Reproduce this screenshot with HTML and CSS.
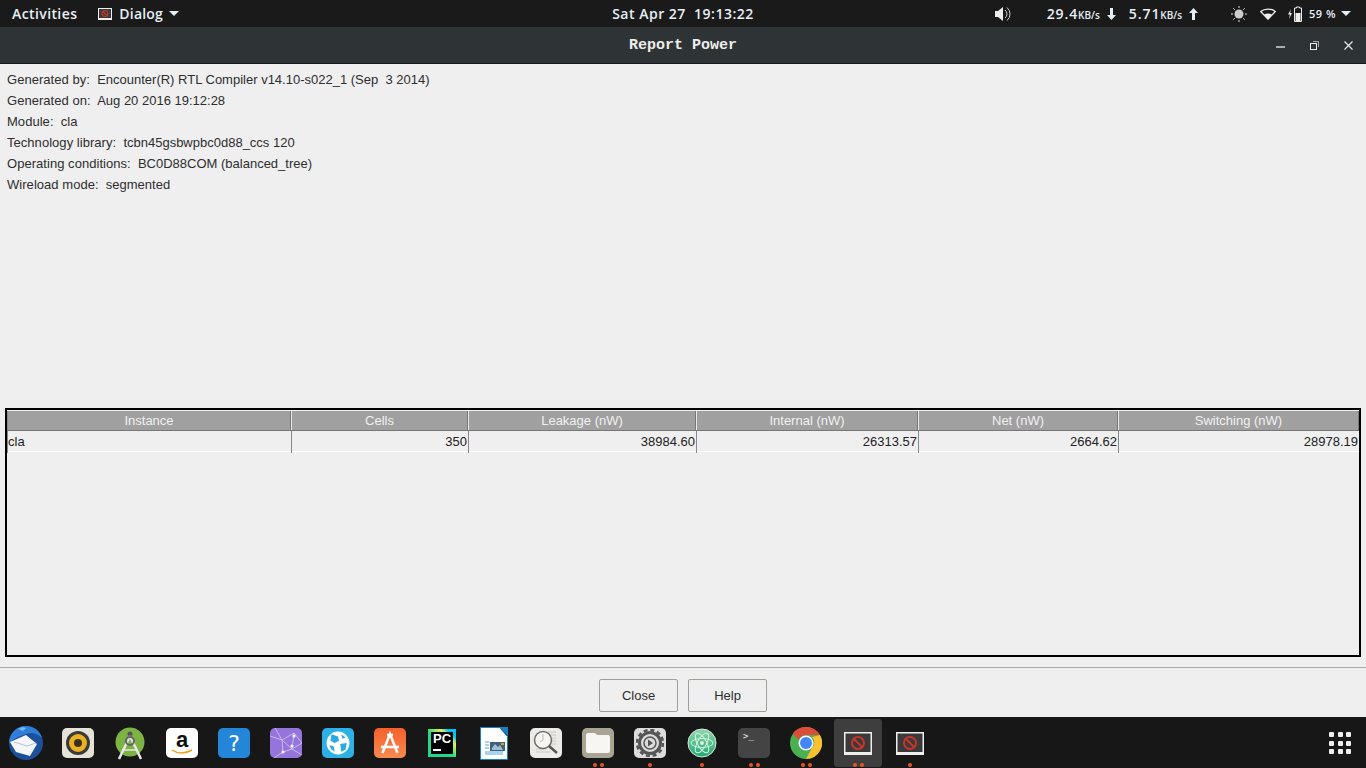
FILE: index.html
```html
<!DOCTYPE html>
<html lang="en">
<head>
    <meta charset="UTF-8">
    <title>Report Power</title>
    <link rel="stylesheet" href="styles.css">
</head>
<body>
    <div class="topbar">
        <div class="top-left">
            <span class="activities">Activities</span>
            <span class="app-menu">
                <svg class="app-icon" width="14" height="12" viewBox="0 0 14 12"><rect width="14" height="12" fill="#eee"/><rect x="1" y="1" width="12" height="9" fill="#3a3a3a"/><circle cx="7" cy="5.500" r="3" fill="none" stroke="#c0392b" stroke-width="1.200"/><path d="M5 3.500l4 4" stroke="#c0392b" stroke-width="1.200"/></svg>
                <span class="app-name">Dialog</span>
                <span class="caret"></span>
            </span>
        </div>
        <div class="clock">Sat Apr 27&nbsp;&nbsp;19:13:22</div>
        <div class="top-right">
            <svg class="volume" width="16" height="16" viewBox="0 0 16 16"><path d="M0 5h3l5-4v14l-5-4H0z" fill="#eee"/><path d="M10 4a5 5 0 0 1 0 8M12 1.500a8.500 8.500 0 0 1 0 13" fill="none" stroke="#ccc"/></svg>
            <span class="speed"><b>29.4</b><small>KB/s</small></span>
            <svg class="arrow" width="9" height="12" viewBox="0 0 9 12"><path d="M3 0h3v7h3l-4.500 5L0 7h3z" fill="#e8eef5"/></svg>
            <span class="speed"><b>5.71</b><small>KB/s</small></span>
            <svg class="arrow arrow-up" width="9" height="12" viewBox="0 0 9 12"><path d="M3 12h3V5h3L4.500 0 0 5h3z" fill="#e8eef5"/></svg>
            <svg class="brightness" width="16" height="16" viewBox="0 0 16 16"><circle cx="8" cy="8" r="4.500" fill="#ccc"/><path d="M8 0v2M8 14v2M0 8h2M14 8h2M2.300 2.300l1.500 1.500M12.200 12.200l1.500 1.500M2.300 13.700l1.500-1.500M12.200 3.800l1.500-1.500" stroke="#ddd" fill="none"/></svg>
            <svg class="wifi" width="16" height="12" viewBox="0 0 16 12"><path d="M.7 3.500C4.500.2 11.500.2 15.300 3.500L8 11.200z" fill="none" stroke="#eee" stroke-width="1.300"/><path d="M4 6.500c2.500-1.300 5.500-1.300 8 0L8 11z" fill="#eee"/></svg>
            <svg class="battery" width="15" height="16" viewBox="0 0 15 16"><path d="M3 3L0 8.500h2L1 13l3-6H2z" fill="#eee"/><path d="M8.500 1h3v1h2v13.500h-7V2h2z" fill="none" stroke="#eee"/><rect x="7.500" y="7" width="5" height="8" fill="#eee"/></svg>
            <span class="percent">59 %</span>
            <span class="caret"></span>
        </div>
    </div>

    <div class="titlebar">
        <span class="title">Report Power</span>
        <div class="window-buttons">
            <svg width="9" height="9" viewBox="0 0 9 9"><path d="M0 6h9" stroke="#eee" stroke-width="1.300"/></svg>
            <svg width="9" height="9" viewBox="0 0 9 9"><rect x=".5" y="2.500" width="6" height="6" fill="none" stroke="#eee"/><path d="M3 .5h5.500V6" fill="none" stroke="#aaa"/></svg>
            <svg width="9" height="9" viewBox="0 0 9 9"><path d="M.5.500l8 8M8.500.5l-8 8" stroke="#eee" stroke-width="1.100"/></svg>
        </div>
    </div>

    <div class="dialog">
        <div class="info">
            <p><span class="key">Generated by:</span>&nbsp; Encounter(R) RTL Compiler v14.10-s022_1 (Sep&nbsp; 3 2014)</p>
            <p><span class="key">Generated on:</span>&nbsp; Aug 20 2016 19:12:28</p>
            <p><span class="key">Module:</span>&nbsp; cla</p>
            <p><span class="key">Technology library:</span>&nbsp; tcbn45gsbwpbc0d88_ccs 120</p>
            <p><span class="key">Operating conditions:</span>&nbsp; BC0D88COM (balanced_tree)</p>
            <p><span class="key">Wireload mode:</span>&nbsp; segmented</p>
        </div>

        <div class="report">
            <div class="row head">
                <div>Instance</div>
                <div>Cells</div>
                <div>Leakage (nW)</div>
                <div>Internal (nW)</div>
                <div>Net (nW)</div>
                <div>Switching (nW)</div>
            </div>
            <div class="row data">
                <div>cla</div>
                <div>350</div>
                <div>38984.60</div>
                <div>26313.57</div>
                <div>2664.62</div>
                <div>28978.19</div>
            </div>
        </div>

        <div class="actions">
            <button type="button">Close</button>
            <button type="button">Help</button>
        </div>
    </div>

    <div class="dock">
        <div class="slot"><svg width="36" height="36" viewBox="0 0 36 36"><circle cx="18" cy="18" r="17" fill="#1c4f9c"/><path d="M1 18A17 17 0 0 1 18 1c8 0 14 5 16 12-5-5-11-6-16-4-7 2-12 5-17 9z" fill="#2f7fd8"/><path d="M10 4c3-2 6-2 8-1l-3 3z" fill="#7ab6ee"/><path d="M2 17l16-7 11 9-7 12-14-4z" fill="#f4f6fa"/><path d="M6 17l13 4 9-3" fill="none" stroke="#b8c4d8"/></svg></div>
        <div class="slot"><div class="tile tile-rhythm"><span class="speaker"></span></div></div>
        <div class="slot"><svg width="30" height="33" viewBox="0 0 30 33"><circle cx="15" cy="15" r="14.500" fill="#7cb342"/><circle cx="15" cy="7" r="2.500" fill="#555"/><path d="M15 9L4 32M15 9l11 23" stroke="#e8e8e8" stroke-width="2.500" fill="none"/><path d="M7 23h16" stroke="#e8e8e8" stroke-width="1.500"/><circle cx="15" cy="14" r="4" fill="none" stroke="#666" stroke-width="2"/></svg></div>
        <div class="slot"><div class="tile tile-amazon"><span class="amazon-a">a</span><svg width="22" height="6" viewBox="0 0 22 6"><path d="M1 1c6 4 13 4 20 0" fill="none" stroke="#f39c12" stroke-width="1.500"/></svg></div></div>
        <div class="slot"><div class="tile tile-help">?</div></div>
        <div class="slot"><div class="tile tile-mesh"><svg width="32" height="30" viewBox="0 0 32 30"><path d="M0 8l12 4 12-7 8 10-10 6-10-9M12 12L13 24l9-3M5 0l7 12M24 5l-2 16M13 24L4 30M22 21l10 6" fill="none" stroke="#d6c8f5" stroke-width=".8"/><circle cx="13" cy="24" r="1.500" fill="#fff"/><circle cx="22" cy="18" r="1.500" fill="#fff"/><circle cx="24" cy="8" r="1.500" fill="#fff"/></svg></div></div>
        <div class="slot"><div class="tile tile-globe"><svg width="24" height="24" viewBox="0 0 22 22"><circle cx="11" cy="11" r="10.500" fill="#fff"/><path d="M5 3l6 2 1 4-4 2-4-2zM13 12l6-1-1 6-4 2zM14 3l4 3-3 1zM3 13l4 1 1 5-3-2z" fill="#29abe2"/></svg></div></div>
        <div class="slot"><div class="tile tile-store"><svg width="24" height="24" viewBox="0 0 24 24"><path d="M4.500 22L12 3l7.500 19M3 16h18M9 4h6" stroke="#fff" stroke-width="2.500" fill="none"/></svg></div></div>
        <div class="slot"><div class="pycharm"><div class="pycharm-inner"><span>PC</span><i></i></div></div></div>
        <div class="slot"><svg width="28" height="33" viewBox="0 0 28 33"><path d="M.5.5h19l8 9v23H.5z" fill="#fff" stroke="#1b7fc4"/><path d="M19 0h9v9z" fill="#1b7fc4"/><rect x="10" y="15" width="15" height="9" fill="#41607a"/><path d="M12 21l3-4 3 3 2-2 3 5H12z" fill="#9ac0d8"/><path d="M21 16h3v2h-3z" fill="#e0a030"/><path d="M5 15h4M5 18h4M5 21h4M5 25h18M5 27h18" stroke="#58a6dc"/></svg></div>
        <div class="slot"><div class="tile tile-scan"><svg width="28" height="28" viewBox="0 0 28 28"><path d="M16 3h8M18 6h6M20 9h4M20 12h4M20 15h4M4 20h8M4 23h14" stroke="#c8c8c4"/><circle cx="11" cy="11" r="8.500" fill="#f5f5f2" stroke="#6e6e6a" stroke-width="1.500"/><path d="M11 5v6l-3 2" stroke="#bbb" fill="none"/><path d="M17 17l8 7" stroke="#555" stroke-width="2.500"/></svg></div></div>
        <div class="slot dots-2"><div class="tile tile-files"><svg width="24" height="20" viewBox="0 0 24 20"><path d="M0 2a2 2 0 0 1 2-2h7l2 2h11a2 2 0 0 1 2 2v14a2 2 0 0 1-2 2H2a2 2 0 0 1-2-2z" fill="#f7f6f3"/></svg></div></div>
        <div class="slot dots-1"><div class="tile tile-settings"><svg width="28" height="28" viewBox="0 0 28 28"><circle cx="14" cy="14" r="10.500" fill="none" stroke="#555" stroke-width="3"/><circle cx="14" cy="14" r="13" fill="none" stroke="#555" stroke-width="2.500" stroke-dasharray="4 2.800"/><circle cx="14" cy="14" r="6" fill="none" stroke="#555" stroke-width="1.500"/><path d="M12 10.500l5 3.500-5 3.500z" fill="#555"/></svg></div></div>
        <div class="slot dots-1"><svg width="30" height="30" viewBox="0 0 30 30"><defs><linearGradient id="atomFill" x1="0" y1="0" x2="0" y2="1"><stop offset="0" stop-color="#8fd6ac"/><stop offset="1" stop-color="#1fa870"/></linearGradient></defs><circle cx="15" cy="15" r="14" fill="url(#atomFill)" stroke="#d8e8dc"/><g fill="none" stroke="#d6f2e2"><ellipse cx="15" cy="15" rx="11" ry="4.500"/><ellipse cx="15" cy="15" rx="11" ry="4.500" transform="rotate(60 15 15)"/><ellipse cx="15" cy="15" rx="11" ry="4.500" transform="rotate(120 15 15)"/></g><circle cx="15" cy="15" r="2" fill="#d6f2e2"/></svg></div>
        <div class="slot dots-2"><div class="tile tile-term"><span>&gt;_</span></div></div>
        <div class="slot dots-2"><svg width="32" height="32" viewBox="0 0 32 32"><circle cx="16" cy="16" r="16" fill="#4caf50"/><path d="M16 0a16 16 0 0 1 13.900 8H16a8 8 0 0 0-7.500 5L2.800 6.500A16 16 0 0 1 16 0z" fill="#dd4b39"/><path d="M29.900 8A16 16 0 0 1 16 32l6.500-12A8 8 0 0 0 22 10z" fill="#fbc02d"/><circle cx="16" cy="16" r="7.500" fill="#fff"/><circle cx="16" cy="16" r="6" fill="#4285f4"/></svg></div>
        <div class="slot dots-2 active"><svg width="28" height="23" viewBox="0 0 28 23"><rect width="28" height="23" fill="#eee"/><rect x="1.500" y="1.500" width="25" height="18.500" fill="#3a3a3a"/><circle cx="14" cy="11" r="6" fill="none" stroke="#c8352b" stroke-width="2"/><path d="M10 7l8 8" stroke="#c8352b" stroke-width="2"/></svg></div>
        <div class="slot dots-1"><svg width="28" height="23" viewBox="0 0 28 23"><rect width="28" height="23" fill="#eee"/><rect x="1.500" y="1.500" width="25" height="18.500" fill="#3a3a3a"/><circle cx="14" cy="11" r="6" fill="none" stroke="#c8352b" stroke-width="2"/><path d="M10 7l8 8" stroke="#c8352b" stroke-width="2"/></svg></div>
        <div class="app-grid">
            <i></i><i></i><i></i><i></i><i></i><i></i><i></i><i></i><i></i>
        </div>
    </div>
</body>
</html>
```

FILE: styles.css
```css
html, body {
    margin: 0;
    padding: 0;
}
body {
    width: 1366px;
    height: 768px;
    overflow: hidden;
    display: flex;
    flex-direction: column;
    background-color: #efefef;
    font-family: "Liberation Sans", Arial, sans-serif;
}

/* top panel */
.topbar {
    height: 27px;
    flex: none;
    display: grid;
    grid-template-columns: 1fr auto 1fr;
    align-items: center;
    background-color: #1a1a1a;
    color: #e8eef5;
    font-family: "Open Sans", sans-serif;
    font-size: 14px;
    font-weight: 600;
}
.top-left {
    display: flex;
    align-items: center;
    padding-left: 12px;
}
.activities {
    margin-right: 21px;
    letter-spacing: .4px;
}
.app-menu {
    display: flex;
    align-items: center;
}
.app-icon {
    margin-right: 7px;
}
.app-name {
    letter-spacing: .2px;
}
.caret {
    display: inline-block;
    width: 0;
    height: 0;
    margin-left: 6px;
    border-left: 5px solid transparent;
    border-right: 5px solid transparent;
    border-top: 5px solid #e8eef5;
}
.clock {
    font-size: 14px;
    letter-spacing: .5px;
}
.top-right {
    display: flex;
    align-items: center;
    justify-content: flex-end;
    padding-right: 15px;
}
.top-right .caret {
    margin-left: 5px;
}
.volume {
    margin-right: 36px;
}
.speed b {
    font-weight: 600;
    letter-spacing: .9px;
}
.speed small {
    font-size: 10px;
}
.arrow {
    margin: 0 13px 0 7px;
}
.arrow-up {
    margin-right: 33px;
}
.brightness {
    margin-right: 13px;
}
.wifi {
    margin-right: 12px;
}
.battery {
    margin-right: 6px;
}
.percent {
    font-size: 11px;
    letter-spacing: .5px;
}

/* window title */
.titlebar {
    height: 36px;
    flex: none;
    position: relative;
    display: flex;
    align-items: center;
    justify-content: center;
    background-color: #2e3436;
    border-bottom: 1px solid #14181a;
    color: #eeeeec;
}
.title {
    font-family: "Liberation Mono", monospace;
    font-size: 15px;
    font-weight: bold;
}
.window-buttons {
    position: absolute;
    right: 13px;
    top: 14px;
    display: flex;
    gap: 25px;
}

/* dialog body */
.dialog {
    flex: 1;
    display: flex;
    flex-direction: column;
    color: #2e2e2e;
    font-size: 13px;
}
.info {
    height: 344px;
    flex: none;
    box-sizing: border-box;
    padding: 5px 7px 0;
}
.info p {
    margin: 0;
    height: 21px;
    line-height: 21px;
    white-space: pre;
}
.key {
    letter-spacing: .04px;
}
.report {
    height: 244px;
    flex: none;
    margin: 0 5px;
    padding-top: 1px;
    border: 2px solid #000;
}
.row {
    display: grid;
    grid-template-columns: 284px 177px 228px 222px 200px 241px;
}
.head {
    height: 19px;
    background-color: #a0a0a0;
    color: #f0f0f0;
    text-align: center;
    line-height: 19px;
    border-bottom: 1px solid #777;
}
.head div {
    border-right: 1px solid #777;
    border-left: 1px solid #e8e8e8;
    box-sizing: border-box;
}
.head div:first-child {
    border-left-color: #8a8a8a;
}
.data {
    height: 21px;
    line-height: 22px;
    color: #222;
    border-bottom: 1px solid #fff;
    box-sizing: border-box;
    text-align: right;
}
.data div {
    border-left: 1px solid #888;
    padding-right: 1px;
    box-sizing: border-box;
}
.data div:first-child {
    text-align: left;
}
.actions {
    flex: 1;
    margin-top: 10px;
    border-top: 1px solid #a8a8a4;
    display: flex;
    justify-content: center;
    gap: 10px;
    padding-top: 11px;
}
.actions button {
    width: 79px;
    height: 33px;
    background-color: #efefef;
    border: 1px solid #a39f98;
    border-radius: 2px;
    color: #2e2e2e;
    font-family: inherit;
    font-size: 13px;
    padding: 0;
}

/* dock */
.dock {
    height: 51px;
    flex: none;
    display: flex;
    align-items: flex-start;
    background-color: #171717;
    position: relative;
}
.slot {
    width: 48px;
    height: 48px;
    margin: 2px 2px 0;
    flex: none;
    display: flex;
    align-items: center;
    justify-content: center;
    position: relative;
    border-radius: 3px;
}
.slot.active {
    background-color: #3e3e3e;
}
.dots-1::after,
.dots-2::after {
    content: "";
    position: absolute;
    bottom: 0;
    left: 50%;
    width: 4px;
    height: 4px;
    border-radius: 50%;
    background-color: #e95420;
}
.dots-1::after {
    margin-left: -2px;
}
.dots-2::after {
    margin-left: -5px;
    box-shadow: 7px 0 0 #e95420;
}
.tile {
    width: 32px;
    height: 30px;
    border-radius: 5px;
    display: flex;
    flex-direction: column;
    align-items: center;
    justify-content: center;
}
.tile-rhythm {
    background-color: #e6e2d8;
}
.speaker {
    width: 8px;
    height: 8px;
    border-radius: 50%;
    background-color: #3a3020;
    border: 5px solid #eab221;
    box-shadow: 0 0 0 3px #3a3a3a;
}
.tile-amazon {
    background-color: #fff;
    color: #111;
}
.amazon-a {
    font-size: 22px;
    font-weight: bold;
    line-height: 18px;
}
.tile-help {
    background-color: #2386d8;
    color: #fff;
    font-family: "DejaVu Sans", sans-serif;
    font-size: 22px;
}
.tile-mesh {
    background-color: #9575dc;
}
.tile-globe {
    background-color: #2cb1e6;
}
.tile-store {
    background: linear-gradient(#f4602a, #fa8a50);
}
.pycharm {
    width: 28px;
    height: 28px;
    background: linear-gradient(225deg, #07c3f2 16%, transparent 30%), linear-gradient(45deg, #21d789 45%, #fcf84a 75%);
    display: flex;
    align-items: center;
    justify-content: center;
}
.pycharm-inner {
    width: 22px;
    height: 22px;
    background-color: #000;
    color: #fff;
    font-size: 13px;
    font-weight: bold;
    line-height: 14px;
    padding-left: 2px;
    box-sizing: border-box;
}
.pycharm-inner span {
    display: block;
}
.pycharm-inner i {
    display: block;
    width: 8px;
    height: 2px;
    margin-top: 3px;
    background-color: #fff;
}
.tile-scan {
    background-color: #ecebe8;
}
.tile-files {
    background-color: #a9a493;
}
.tile-settings {
    background-color: #dcdcdc;
}
.tile-term {
    background-color: #444;
    color: #eee;
    font-family: "DejaVu Sans Mono", monospace;
    font-size: 9px;
    align-items: flex-start;
    justify-content: flex-start;
    padding: 3px 5px;
    box-sizing: border-box;
}
.app-grid {
    position: absolute;
    right: 15px;
    top: 15px;
    display: grid;
    grid-template-columns: repeat(3, 5px);
    gap: 3.500px;
}
.app-grid i {
    width: 5px;
    height: 5px;
    background-color: #eee;
    border-radius: 1px;
}
```
